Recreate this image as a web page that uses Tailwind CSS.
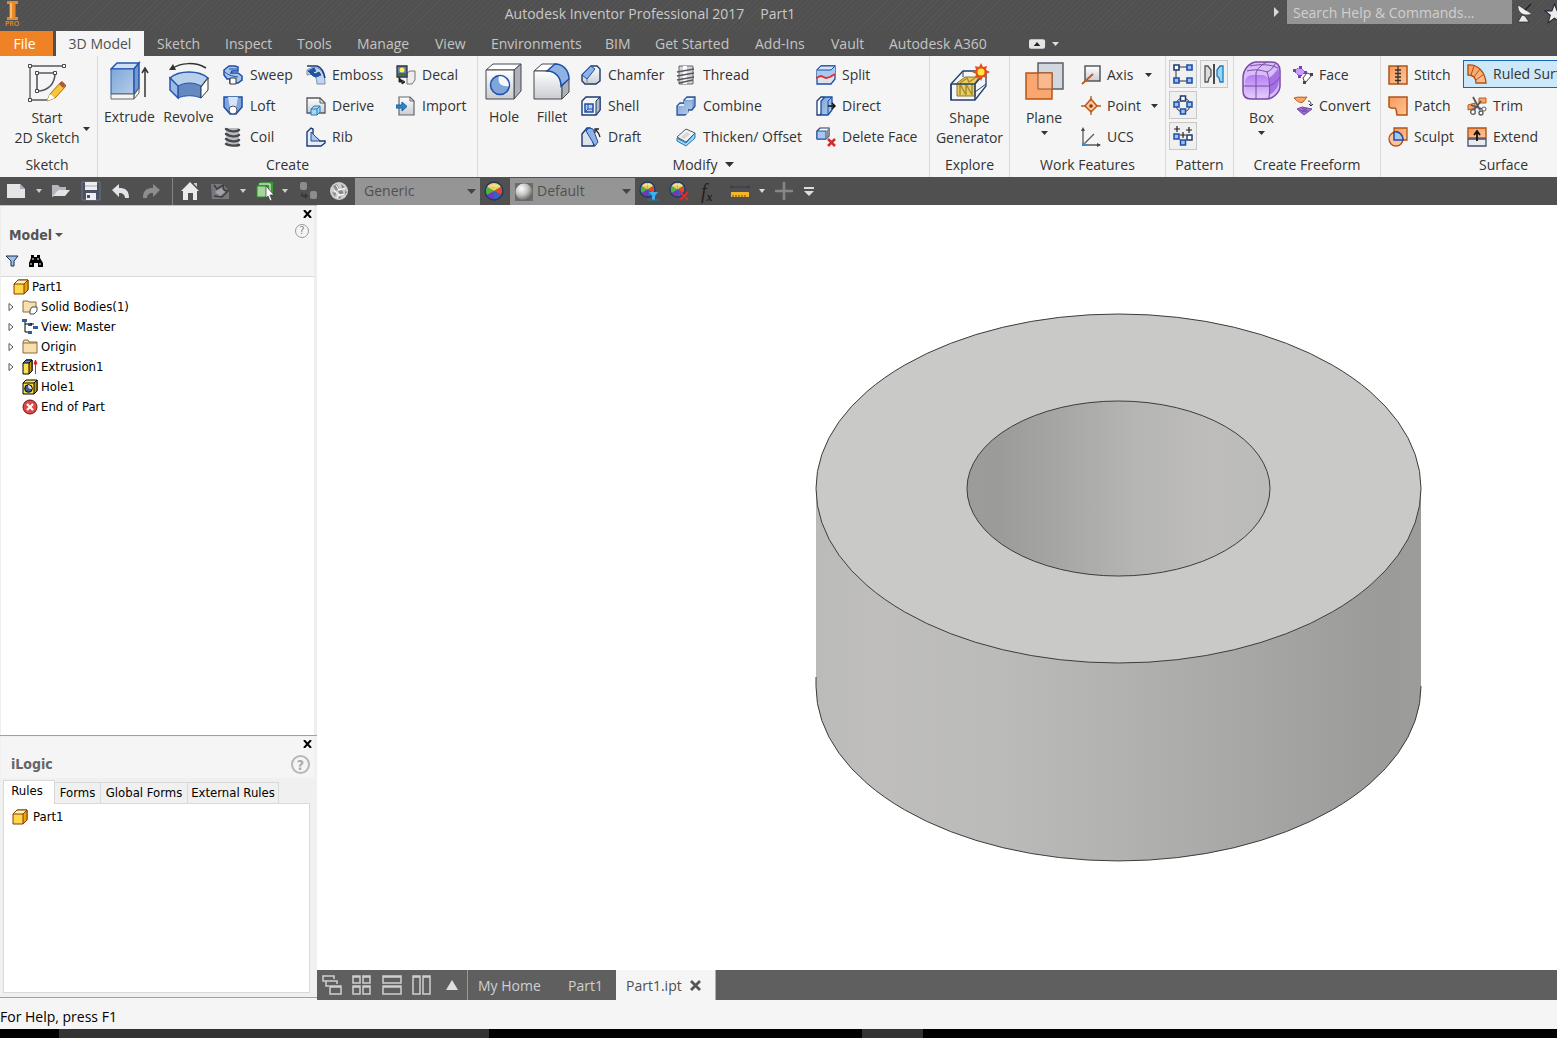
<!DOCTYPE html>
<html lang="en">
<head>
  <meta charset="utf-8">
  <meta name="viewport" content="width=device-width, initial-scale=1">
  <title>Autodesk Inventor Professional 2017 - Part1</title>
  <script src="https://cdn.jsdelivr.net/npm/@tailwindcss/browser@4"></script>
</head>
<body class="flex h-screen flex-col overflow-hidden bg-[#f5f5f5] font-['Open_Sans',sans-serif] text-sm text-[#333333]">

  <!-- Shared gradients and icons -->
  <svg class="absolute h-0 w-0" aria-hidden="true">
    <defs>
      <linearGradient id="blue" x1="0" y1="0" x2="1" y2="1"><stop offset="0" stop-color="#7fa6d8"/><stop offset="1" stop-color="#b4cdea"/></linearGradient>
      <linearGradient id="grey" x1="0" y1="0" x2="0" y2="1"><stop offset="0" stop-color="#ffffff"/><stop offset="1" stop-color="#c9ccd1"/></linearGradient>
      <linearGradient id="orange" x1="0" y1="0" x2="1" y2="1"><stop offset="0" stop-color="#f79a58"/><stop offset="1" stop-color="#ffc499"/></linearGradient>
      <linearGradient id="purple" x1="0" y1="0" x2="0" y2="1"><stop offset="0" stop-color="#b67df5"/><stop offset="1" stop-color="#e2cdfa"/></linearGradient>
      <radialGradient id="ball" cx=".35" cy=".3" r=".75"><stop offset="0" stop-color="#ffffff"/><stop offset=".5" stop-color="#c4c4c0"/><stop offset="1" stop-color="#5c5c5c"/></radialGradient>
      <symbol id="wheel" viewBox="0 0 20 20">
        <circle cx="10" cy="10" r="9" fill="#2e4f8c"/>
        <path d="M10 10V2a8 8 0 0 1 7 4z" fill="#d9df52"/><path d="M10 10l7-4a8 8 0 0 1 0 8z" fill="#e8452c"/>
        <path d="M10 10l7 4a8 8 0 0 1-7 4z" fill="#3560c4"/><path d="M10 10v8a8 8 0 0 1-7-4z" fill="#7a35c0"/>
        <path d="M10 10l-7 4a8 8 0 0 1 0-8z" fill="#49b53c"/><path d="M10 10L3 6a8 8 0 0 1 7-4z" fill="#f3c766"/>
        <circle cx="10" cy="10" r="9" fill="none" stroke="#23375f" stroke-width="1.300"/><path d="M4 6a8 8 0 0 1 12 0c-3-1-9-1-12 0z" fill="#fff" fill-opacity=".45"/>
      </symbol>
      <symbol id="part" viewBox="0 0 16 16">
        <path d="M1 5l4-4h10v10l-4 4H1z" fill="#ffd84a" stroke="#8a3a00"/><path d="M1 5l4-4h10l-4 4z" fill="#fff3b8" stroke="#8a3a00"/><path d="M11 5l4-4v10l-4 4z" fill="#e5a800" stroke="#8a3a00"/>
      </symbol>
    </defs>
  </svg>

  <!-- Title bar -->
  <header class="flex h-[31px] shrink-0 items-start overflow-hidden bg-[#505050] bg-[repeating-linear-gradient(135deg,#505050_0px,#505050_3px,#555555_3px,#555555_4px)] text-[#c9c9c9]">
    <svg class="h-[27px] w-[26px] shrink-0" viewBox="0 0 26 27">
      <path d="M7 1h11v3h-2.500v13H18v3H7v-3h2.500V4H7z" fill="#e88a2b"/><path d="M10 3h2v15h-2z" fill="#f7bd78"/>
      <text x="5" y="26" font-size="7" font-weight="600" fill="#e88a2b">PRO</text>
    </svg>
    <h1 class="flex flex-1 justify-center gap-4 leading-7"><span>Autodesk Inventor Professional 2017</span><span>Part1</span></h1>
    <div class="flex shrink-0 items-start">
      <svg class="mt-[7px] mr-[7px] h-[10px] w-[6px]" viewBox="0 0 6 10"><path d="M0 0l5 5-5 5z" fill="#d8d8d8"/></svg>
      <input type="text" aria-label="Search Help and Commands" placeholder="Search Help &amp; Commands..." class="h-6 w-[225px] bg-[#959595] px-[6px] text-sm text-white placeholder:text-[#d0d0d0]">
      <button type="button" aria-label="Communication center" class="mt-[3px] ml-[4px] h-5 w-5">
        <svg viewBox="0 0 20 20"><path d="M2 2c-1 8 6 12 14 9z" fill="#f0f0f0" stroke="#333" stroke-width=".7"/><path d="M9 7l6-6" stroke="#222" stroke-width="1.500"/><path d="M6 12l-4 7h11l-4-6z" fill="#e8e8e8" stroke="#222" stroke-width=".7"/></svg>
      </button>
      <button type="button" aria-label="Favorites" class="mt-[3px] mr-[-8px] ml-[8px] h-[21px] w-[21px]">
        <svg viewBox="0 0 20 20"><path d="M10 1l2.500 6.500H19l-5 4.200 2 7L10 14.500 4 18.700l2-7-5-4.200h6.500z" fill="#ececec" stroke="#222a38"/></svg>
      </button>
    </div>
  </header>

  <!-- Ribbon tabs -->
  <nav class="flex h-[25px] shrink-0 items-stretch bg-[#505050] text-[#c4c4c4]">
    <button type="button" class="w-[53px] bg-[#f08226] pr-1 text-white">File</button>
    <a href="#" class="ml-[3px] flex w-[88px] items-center justify-center bg-[#f5f5f5] text-[#505050]">3D Model</a>
    <div class="flex items-center whitespace-nowrap pl-[13px]">
      <a href="#" class="w-[68px]">Sketch</a>
      <a href="#" class="w-[72px]">Inspect</a>
      <a href="#" class="w-[60px]">Tools</a>
      <a href="#" class="w-[78px]">Manage</a>
      <a href="#" class="w-[56px]">View</a>
      <a href="#" class="w-[114px]">Environments</a>
      <a href="#" class="w-[50px]">BIM</a>
      <a href="#" class="w-[100px]">Get Started</a>
      <a href="#" class="w-[76px]">Add-Ins</a>
      <a href="#" class="w-[58px]">Vault</a>
      <a href="#" class="w-[140px]">Autodesk A360</a>
      <button type="button" aria-label="Minimize ribbon" class="flex items-center gap-[6px]">
        <svg class="h-[10px] w-[17px]" viewBox="0 0 18 10"><rect width="17" height="10" rx="2" fill="#e2e4e8"/><path d="M5 7l3.500-4L12 7z" fill="#222"/></svg>
        <svg class="h-1 w-[7px]" viewBox="0 0 7 4"><path d="M0 0h7L3.500 4z" fill="#dddddd"/></svg>
      </button>
    </div>
  </nav>

  <!-- Ribbon -->
  <div class="flex h-[121px] shrink-0 overflow-hidden whitespace-nowrap bg-[#f5f5f5] leading-5">

    <section class="flex w-[98px] shrink-0 flex-col border-r border-[#d9d9d9] pt-[3px]">
      <div class="h-[93px]">
        <button type="button" class="relative flex w-[94px] flex-col items-center pt-[2px]">
          <svg class="h-[41px] w-[40px]" viewBox="0 0 40 41">
            <g fill="none" stroke="#55585e" stroke-width="1.300"><path d="M3 5h34M3 5v34h18"/><path d="M10 12h18c0 10-6 18-18 18z" stroke-width="1.600"/></g>
            <g fill="#fff" stroke="#44474c"><path d="M1.500 3.500h3v3h-3zM35.500 3.500h3v3h-3zM1.500 37.500h3v3h-3zM8.500 10.500h3v3h-3zM26.500 10.500h3v3h-3zM8.500 28.500h3v3h-3z"/></g>
            <path d="M20 40l3-7 11-12 5 4-11 12z" fill="#f8c63c" stroke="#a86a08"/><path d="M20 40l3-7 5 4z" fill="#fff"/><path d="M32 23l3-3 4 4-3 3z" fill="#b0563a"/>
          </svg>
          <span class="mt-[6px]">Start</span>
          <span>2D Sketch</span>
          <svg class="absolute right-[4px] bottom-[17px] h-1 w-[7px]" viewBox="0 0 7 4"><path d="M0 0h7L3.500 4z" fill="#333"/></svg>
        </button>
      </div>
      <h2 class="pr-[3px] text-center leading-[25px]">Sketch</h2>
    </section>

    <section class="flex w-[380px] shrink-0 flex-col border-r border-[#d9d9d9] pt-[3px]">
      <div class="grid h-[93px] grid-cols-[61px_57px_83px_90px_80px] pl-[1px]">
        <button type="button" class="flex flex-col items-center pt-[2px]">
          <svg class="h-[42px] w-[40px]" viewBox="0 0 40 42">
            <path d="M1 8l6-6h22l-5 6z" fill="#cfe0f4" stroke="#2455b0" stroke-width="1.500"/><path d="M1 8h23v25H1z" fill="url(#blue)" stroke="#2455b0"/><path d="M24 8l5-6v25l-5 7z" fill="#7298cc" stroke="#2455b0" stroke-width="1.500"/>
            <path d="M1 33h23v5H1zM24 34l5-7v5l-5 6z" fill="#f4f4f4" stroke="#666"/><path d="M35 36V9M32 12l3-5 3 5" fill="none" stroke="#333" stroke-width="1.500"/>
          </svg>
          <span class="mt-[4px]">Extrude</span>
        </button>
        <button type="button" class="flex flex-col items-center pt-[2px]">
          <svg class="h-[42px] w-[42px]" viewBox="0 0 42 42">
            <path d="M4 8C12 1 28 1 38 7" fill="none" stroke="#333" stroke-width="1.500"/><path d="M1 9l4-6 3 6z" fill="#333"/>
            <path d="M2 17c9-8 29-8 38 0l-7 9c-6-4-16-4-23 0z" fill="#b9d0ec" stroke="#2455b0" stroke-width="1.500"/><path d="M10 25c7-4 16-4 23 0v12c-7-3-16-3-23 0z" fill="#6488bf" stroke="#2455b0"/><path d="M2 17l8 8v12l-8-8z" fill="#9dbbe2" stroke="#2455b0" stroke-width="1.500"/><path d="M33 26l7-9v12l-7 8z" fill="#fff" stroke="#333"/>
          </svg>
          <span class="mt-[4px]">Revolve</span>
        </button>
        <div class="pl-[6px]">
          <button type="button" class="flex h-[31px] items-center gap-[7px]">
            <svg class="h-5 w-5" viewBox="0 0 20 20"><path d="M1 5l5-4h6l3 1v4H9l-1 2h7l4 3v4l-4 3H7v-4H4l-3-4z" fill="#a6c5ec" stroke="#1d4ea8" stroke-width="1.500"/><path d="M1 6c3 4 8 5 14 6M6 4h8" fill="none" stroke="#1d4ea8"/><path d="M7 13h6v6H7z" fill="#fff" stroke="#333"/></svg>Sweep
          </button>
          <button type="button" class="flex h-[31px] items-center gap-[7px]">
            <svg class="h-5 w-5" viewBox="0 0 20 20"><path d="M1 1h18v10l-6 7H7l-6-7z" fill="#7ea6dc" stroke="#1d4ea8" stroke-width="1.500"/><path d="M5 1h10l-2 11H7z" fill="#d5e4f6"/><circle cx="10" cy="14" r="4" fill="#fff" stroke="#555"/></svg>Loft
          </button>
          <button type="button" class="flex h-[31px] items-center gap-[7px]">
            <svg class="h-5 w-5" viewBox="0 0 20 20"><path d="M3 1h13v18H3z" fill="#b9bbbe"/><g fill="none" stroke="#45484c" stroke-width="2.400" stroke-linecap="round"><path d="M3 2c4 3 10 3 13 1M3 7c4 3 10 3 13 1M3 12c4 3 10 3 13 1M3 17c4 2 10 2 13 1"/></g></svg>Coil
          </button>
        </div>
        <div class="pl-[6px]">
          <button type="button" class="flex h-[31px] items-center gap-[6px]">
            <svg class="h-5 w-5" viewBox="0 0 20 20"><path d="M1 5C10-1 19 4 19 19h-8C11 12 8 8 1 10z" fill="#c3d5ea" stroke="#7990ad"/><path d="M1 1h10c5 2 7 6 8 12" fill="none" stroke="#173a7a" stroke-width="1.500"/><path d="M2 6l6-3 2 3-3 1 2 2 4-2 2 3-5 2-3-1z" fill="#2054a8" stroke="#2054a8"/></svg>Emboss
          </button>
          <button type="button" class="flex h-[31px] items-center gap-[6px]">
            <svg class="h-5 w-5" viewBox="0 0 20 20"><path d="M1 2h13l5 5v10H1z" fill="url(#grey)" stroke="#55585e" stroke-width="1.300"/><path d="M14 2v5h5" fill="none" stroke="#55585e"/><path d="M5 13l3-3h6v6l-3 3H5z" fill="#a9d8f3" stroke="#1b7cc0"/><path d="M5 13h6v6M11 13l3-3" fill="none" stroke="#1b7cc0"/></svg>Derive
          </button>
          <button type="button" class="flex h-[31px] items-center gap-[6px]">
            <svg class="h-5 w-5" viewBox="0 0 20 20"><path d="M1 5l4-4 2 1v6l7 6h5v2l-4 3H1z" fill="#e9edf3" stroke="#1b3a70" stroke-width="1.400"/><path d="M5 5v9h9z" fill="#aac6ec" stroke="#1d4ea8"/></svg>Rib
          </button>
        </div>
        <div class="pl-[6px]">
          <button type="button" class="flex h-[31px] items-center gap-[6px]">
            <svg class="h-5 w-5" viewBox="0 0 20 20"><path d="M11 8l3-2h5v9l-3 4h-5z" fill="#eee" stroke="#777"/><path d="M1 1h10v11H1z" fill="#5b83b8" stroke="#333" stroke-width="1.300"/><path d="M2 8h8v3H2z" fill="#4c6a3a"/><circle cx="6" cy="5" r="2.500" fill="#fff14d"/><path d="M3 12v5h5M6 15l3 2-3 2z" fill="#222" stroke="#222"/></svg>Decal
          </button>
          <button type="button" class="flex h-[31px] items-center gap-[6px]">
            <svg class="h-5 w-5" viewBox="0 0 20 20"><path d="M3 1h11l4 4v14H3z" fill="url(#grey)" stroke="#666" stroke-width="1.200"/><path d="M14 1v4h4" fill="none" stroke="#666"/><path d="M0 9h6V6l5 4.500L6 15v-3H0z" fill="#2b86cc" stroke="#15609d"/></svg>Import
          </button>
        </div>
      </div>
      <h2 class="text-center leading-[25px]">Create</h2>
    </section>

    <section class="flex w-[452px] shrink-0 flex-col border-r border-[#d9d9d9] pt-[3px]">
      <div class="grid h-[93px] grid-cols-[48px_48px_95px_140px_110px] pl-[2px]">
        <button type="button" class="flex flex-col items-center pt-[2px]">
          <svg class="h-[42px] w-[40px]" viewBox="0 0 40 42">
            <path d="M2 9l7-6h28l-7 6z" fill="#fff" stroke="#44484e"/><path d="M30 9l7-6v27l-7 8z" fill="#aeb1b7" stroke="#44484e"/><path d="M2 9h28v29H2z" fill="url(#grey)" stroke="#44484e"/>
            <circle cx="16" cy="24" r="9.500" fill="#7fa6d8" stroke="#1d4ea8" stroke-width="1.500"/><path d="M15 15c-2 8 3 11 10 10-1-7-5-10-10-10z" fill="#f4f8fd"/>
          </svg>
          <span class="mt-[4px]">Hole</span>
        </button>
        <button type="button" class="flex flex-col items-center pt-[2px]">
          <svg class="h-[42px] w-[40px]" viewBox="0 0 40 42">
            <path d="M2 10l8-7h15l-9 7z" fill="#fff" stroke="#44484e"/><path d="M2 10h13c9 0 15 7 15 16v12H2z" fill="url(#grey)" stroke="#44484e"/><path d="M30 25l7-7v13l-7 7z" fill="#aeb1b7" stroke="#44484e"/>
            <path d="M15 10l8-7c9 0 14 7 14 15l-8 7c0-8-5-15-14-15z" fill="#8db2e3" stroke="#1d4ea8" stroke-width="1.500"/>
          </svg>
          <span class="mt-[4px]">Fillet</span>
        </button>
        <div class="pl-[5px]">
          <button type="button" class="flex h-[31px] items-center gap-[7px]">
            <svg class="h-5 w-5" viewBox="0 0 20 20"><path d="M1 10l9-9h6l3 3v12l-4 3H4l-3-3z" fill="url(#grey)" stroke="#1b3a70" stroke-width="1.400"/><path d="M1 10l9-9 4 3-8 10z" fill="#8db2e3" stroke="#1d4ea8"/><path d="M6 14v5" stroke="#888"/></svg>Chamfer
          </button>
          <button type="button" class="flex h-[31px] items-center gap-[7px]">
            <svg class="h-5 w-5" viewBox="0 0 20 20"><path d="M1 5l4-4h14v13l-4 5H1z" fill="#f4f4f6" stroke="#1b3a70" stroke-width="1.400"/><path d="M15 5l4-4v13l-4 5z" fill="#b4b8c0" stroke="#1b3a70"/><path d="M4 8h8v8H4z" fill="#b9cff0" stroke="#1d4ea8" stroke-width="1.500"/><path d="M7 8v5h5M7 13l-3 3" fill="none" stroke="#1d4ea8"/></svg>Shell
          </button>
          <button type="button" class="flex h-[31px] items-center gap-[7px]">
            <svg class="h-5 w-5" viewBox="0 0 20 20"><path d="M1 7l5-6h3l4 18H1z" fill="#dfe2e8" stroke="#1b3a70" stroke-width="1.400"/><path d="M5 4l3-3 4 1 5 13-3 4z" fill="#8db2e3" stroke="#1d4ea8"/><path d="M19 10c-1-4-2-5-4-7M14 6V2h4" fill="none" stroke="#222" stroke-width="1.300"/></svg>Draft
          </button>
        </div>
        <div class="pl-[5px]">
          <button type="button" class="flex h-[31px] items-center gap-[7px]">
            <svg class="h-5 w-5" viewBox="0 0 20 20"><path d="M3 1h14v18H3z" fill="#d3d5d8" stroke="#666"/><path d="M7 1h4v18H7z" fill="#fff"/><path d="M1 7l17-3M1 11l17-3M1 15l17-3M3 18l14-3" stroke="#55585c" stroke-width="1.600"/></svg>Thread
          </button>
          <button type="button" class="flex h-[31px] items-center gap-[7px]">
            <svg class="h-5 w-5" viewBox="0 0 20 20"><path d="M1 10l3-3h4V4l3-3h8v9l-3 4h-4v2l-3 3H1z" fill="#7ea4d8" stroke="#2b5798" stroke-width="1.300"/><path d="M2 10h6V5h8v8h-4v5H2z" fill="url(#blue)"/><path d="M2 10l2-2h4v2zM9 4l2-2h7l-2 2z" fill="#e2edf9"/></svg>Combine
          </button>
          <button type="button" class="flex h-[31px] items-center gap-[7px]">
            <svg class="h-5 w-5" viewBox="0 0 20 20"><path d="M1 11l9 5 9-10v5l-9 8-9-5z" fill="#9fd2f3" stroke="#1b7cc0"/><path d="M1 10l9-8 9 4-9 9z" fill="#f1f1f1" stroke="#55585e"/><path d="M5 10l6-5 3 2-6 5z" fill="#d7d7d7"/></svg>Thicken/ Offset
          </button>
        </div>
        <div class="pl-[5px]">
          <button type="button" class="flex h-[31px] items-center gap-[6px]">
            <svg class="h-5 w-5" viewBox="0 0 20 20"><path d="M1 5l4-4h14v13l-4 5H1z" fill="#dfe2e8" stroke="#1d4ea8" stroke-width="1.300"/><path d="M1 5h14l4-4v8l-4 3H1z" fill="#a9c8ee"/><path d="M1 5l4-4h14l-4 4z" fill="#d5e4f6" stroke="#1d4ea8"/><path d="M0 13l5-2 5 2 4-1 5-3" fill="none" stroke="#e02a2a" stroke-width="1.700"/></svg>Split
          </button>
          <button type="button" class="flex h-[31px] items-center gap-[6px]">
            <svg class="h-5 w-5" viewBox="0 0 20 20"><path d="M1 5l4-4h3v13l-4 5H1z" fill="#fff" stroke="#1b3a70" stroke-width="1.300"/><path d="M5 5l4-4h7v13l-4 5H5z" fill="url(#blue)" stroke="#1d4ea8" stroke-width="1.300"/><path d="M12 5l4-4M12 5v14" stroke="#1d4ea8"/><path d="M12 10h6M16 7l3 3-3 3" fill="none" stroke="#111" stroke-width="1.500"/></svg>Direct
          </button>
          <button type="button" class="flex h-[31px] items-center gap-[6px]">
            <svg class="h-5 w-5" viewBox="0 0 20 20"><path d="M1 4l3-3h9v8l-3 3H1z" fill="#fff" stroke="#1b3a70" stroke-width="1.200"/><path d="M1 4h9v8H1z" fill="#a9c8ee" stroke="#1d4ea8"/><path d="M10 4l3-3v8l-3 3z" fill="#8c9096"/><path d="M12 12l7 7M19 12l-7 7" stroke="#d22c2c" stroke-width="2.500"/></svg>Delete Face
          </button>
        </div>
      </div>
      <h2 class="flex items-center justify-center gap-[8px] leading-[25px]">Modify<svg class="h-[5px] w-[9px]" viewBox="0 0 9 5"><path d="M0 0h9L4.500 5z" fill="#333"/></svg></h2>
    </section>

    <section class="flex w-[80px] shrink-0 flex-col border-r border-[#d9d9d9] pt-[3px]">
      <div class="h-[93px]">
        <button type="button" class="flex w-full flex-col items-center pt-[3px]">
          <svg class="h-[40px] w-[40px]" viewBox="0 0 40 40">
            <path d="M1 22l12-13h23v15L25 38H1z" fill="#f3f6fa" stroke="#263f68" stroke-width="1.300"/><path d="M7 21l8-6h14l-4 6v13H7z" fill="#e8cd62" stroke="#8d7420"/><path d="M10 33V22l6 11V22l6 11V22M10 21l7-5 2 4 6-4" fill="none" stroke="#a98d2c" stroke-width="1.500"/><path d="M1 22h24l11-13M25 22v16M1 22v16" fill="none" stroke="#263f68" stroke-width="1.500"/><path d="M13 9v6M25 30l11-8" stroke="#263f68"/>
            <path d="M31 1l2 4 4-1-1 4 4 2-4 2 1 4-4-1-2 4-2-4-4 1 1-4-4-2 4-2-1-4 4 1z" fill="#e84e1c"/><circle cx="31" cy="10" r="3.500" fill="#ffe83c"/>
          </svg>
          <span class="mt-[6px]">Shape</span>
          <span>Generator</span>
        </button>
      </div>
      <h2 class="text-center leading-[25px]">Explore</h2>
    </section>

    <section class="flex w-[156px] shrink-0 flex-col border-r border-[#d9d9d9] pt-[3px]">
      <div class="grid h-[93px] grid-cols-[64px_85px] pl-[2px]">
        <button type="button" class="flex flex-col items-center pt-[2px]">
          <svg class="h-[41px] w-[40px]" viewBox="0 0 40 41"><path d="M14 2h25v26H14z" fill="#d2d7df" stroke="#5b6068" stroke-width="1.500"/><path d="M2 12h26v26H2z" fill="#fb9f60" fill-opacity=".9" stroke="#b75414" stroke-width="1.500"/><path d="M14 12h14v16H14z" fill="#fbb88c" stroke="#8a5a3c"/></svg>
          <span class="mt-[6px]">Plane</span>
          <svg class="mt-[3px] h-1 w-[7px]" viewBox="0 0 7 4"><path d="M0 0h7L3.500 4z" fill="#333"/></svg>
        </button>
        <div class="pl-[5px]">
          <button type="button" class="flex h-[31px] w-[71px] items-center gap-[6px]">
            <svg class="h-5 w-5" viewBox="0 0 20 20"><path d="M4 1h15v15H4z" fill="url(#grey)" stroke="#55585e" stroke-width="1.500"/><path d="M1 19L12 9" stroke="#bb5a1e" stroke-width="1.800"/></svg>Axis
            <svg class="ml-auto h-1 w-[7px]" viewBox="0 0 7 4"><path d="M0 0h7L3.500 4z" fill="#333"/></svg>
          </button>
          <button type="button" class="flex h-[31px] w-[77px] items-center gap-[6px]">
            <svg class="h-5 w-5" viewBox="0 0 20 20"><path d="M10 3l6 7-6 6-6-6z" fill="#fdc59b" stroke="#bb5a1e" stroke-width="1.500"/><path d="M10 0v5M10 14v5M0 10h5M15 10h5" stroke="#bb5a1e" stroke-width="1.300"/><circle cx="10" cy="10" r="1.800" fill="#8a3c0c"/></svg>Point
            <svg class="ml-auto h-1 w-[7px]" viewBox="0 0 7 4"><path d="M0 0h7L3.500 4z" fill="#333"/></svg>
          </button>
          <button type="button" class="flex h-[31px] items-center gap-[6px]">
            <svg class="h-5 w-5" viewBox="0 0 20 20"><path d="M2 18V2M2 18h17M3 17L13 7" fill="none" stroke="#55585e" stroke-width="1.300"/><path d="M0 4l2-4 2 4zM16 16l4 2-4 2z" fill="#44474c"/><path d="M1 16h3v3H1z" fill="#2b8fe0"/></svg>UCS
          </button>
        </div>
      </div>
      <h2 class="text-center leading-[25px]">Work Features</h2>
    </section>

    <section class="flex w-[68px] shrink-0 flex-col border-r border-[#d9d9d9] pt-[3px]">
      <div class="grid h-[93px] grid-cols-[28px_28px] content-start gap-[3px] pt-[1px] pl-[3px]">
        <button type="button" aria-label="Rectangular pattern" class="flex h-7 items-center justify-center border border-[#c8c8c8] bg-[#f0f0f0]">
          <svg class="h-5 w-5" viewBox="0 0 20 20"><path d="M3 3h14M3 3v14h14" fill="none" stroke="#333"/><g fill="#9cc0f0" stroke="#1d4ea8" stroke-width="1.600"><path d="M14 1h5v5h-5zM1 14h5v5H1zM14 14h5v5h-5z"/><path d="M1 1h5v5H1z" fill="#fff" stroke="#1b3a70"/></g></svg>
        </button>
        <button type="button" aria-label="Mirror" class="flex h-7 items-center justify-center border border-[#c8c8c8] bg-[#f0f0f0]">
          <svg class="h-5 w-5" viewBox="0 0 20 20"><path d="M1 2h3l3 4v6l-2 2-1 4H1z" fill="#ddd" stroke="#555" stroke-width="1.300"/><path d="M19 2h-3l-3 4v6l2 2 1 4h3z" fill="#9cd6f5" stroke="#1b7cc0" stroke-width="1.300"/><path d="M10 0v20" stroke="#111" stroke-width="1.500"/></svg>
        </button>
        <button type="button" aria-label="Circular pattern" class="col-start-1 flex h-7 items-center justify-center border border-[#c8c8c8] bg-[#f0f0f0]">
          <svg class="h-5 w-5" viewBox="0 0 20 20"><circle cx="10" cy="10" r="7" fill="none" stroke="#333"/><g fill="#9cc0f0" stroke="#1d4ea8" stroke-width="1.500"><path d="M1 7h5v5H1zM14 7h5v5h-5zM7.500 14h5v5h-5z"/><path d="M7.500 1h5v5h-5z" fill="#fff" stroke="#1b3a70"/></g></svg>
        </button>
        <button type="button" aria-label="Sketch driven pattern" class="col-start-1 flex h-7 items-center justify-center border border-[#c8c8c8] bg-[#f0f0f0]">
          <svg class="h-5 w-5" viewBox="0 0 20 20"><path d="M4 0v6M1 3h6M16 1v6M13 4h6M10 6v6M7 9h6" stroke="#222" stroke-width="1.200"/><g fill="#9cc0f0" stroke="#1d4ea8" stroke-width="1.500"><path d="M1 8h5v5H1zM7.500 14h5v5h-5z"/><path d="M14 9h5v5h-5z" fill="#fff" stroke="#1b3a70"/></g></svg>
        </button>
      </div>
      <h2 class="text-center leading-[25px]">Pattern</h2>
    </section>

    <section class="flex w-[147px] shrink-0 flex-col border-r border-[#d9d9d9] pt-[3px]">
      <div class="grid h-[93px] grid-cols-[53px_85px] pl-[1px]">
        <button type="button" class="flex flex-col items-center pt-[2px]">
          <svg class="h-[41px] w-[40px]" viewBox="0 0 40 41">
            <path d="M1 17c0-8 6-16 14-16h14c6 0 9 3 9 9v15c0 6-7 13-13 13H9c-5 0-8-3-8-8z" fill="#d9bdf8" stroke="#7a4aa5" stroke-width="1.500"/><rect x="3" y="14" width="24" height="23" rx="7" fill="url(#purple)"/><path d="M27 17c3-2 7-6 9-10 2 6 1 14 0 18-2 4-6 8-9 9z" fill="#a671e8"/>
            <path d="M14 38V12c1-4 5-8 11-11M1 25h26c4-1 8-5 11-9M5 10c8-2 14-1 20 1 3 8 3 18 2 26M25 11c4-2 6-4 8-8M8 5c10-2 20-2 28 2" fill="none" stroke="#7a4aa5"/>
          </svg>
          <span class="mt-[6px]">Box</span>
          <svg class="mt-[3px] h-1 w-[7px]" viewBox="0 0 7 4"><path d="M0 0h7L3.500 4z" fill="#333"/></svg>
        </button>
        <div class="pl-[5px]">
          <button type="button" class="flex h-[31px] items-center gap-[6px]">
            <svg class="h-5 w-5" viewBox="0 0 20 20"><path d="M1 6l6-4 5 5-5 5z" fill="#c79df5" stroke="#7a4aa5" stroke-dasharray="2 1"/><path d="M10 13l4-5 5 2-7 8z" fill="#fff" stroke="#444"/><path d="M0 4h3v3H0zM6 1h3v3H6zM5 10h3v3H5zM11 6h3v3h-3z" fill="#7a3cc0"/><path d="M17 8h3v3h-3zM10 16h3v3h-3z" fill="#444"/></svg>Face
          </button>
          <button type="button" class="flex h-[31px] items-center gap-[6px]">
            <svg class="h-5 w-5" viewBox="0 0 20 20"><path d="M1 2c5-2 9 0 13-1l-4 5C7 8 4 5 1 2z" fill="#f7a56a" stroke="#bb5a1e"/><path d="M4 13l5-2 10 2-8 6z" fill="#a06fdc" stroke="#7a4aa5"/><path d="M6 14l8 2M9 12l6 3M8 17l6-5" stroke="#7a4aa5"/><path d="M15 5c3 0 3 2 3 5M16 8l2 2 2-2" fill="none" stroke="#333"/></svg>Convert
          </button>
        </div>
      </div>
      <h2 class="text-center leading-[25px]">Create Freeform</h2>
    </section>

    <section class="flex w-[246px] shrink-0 flex-col border-r border-[#d9d9d9] pt-[3px]">
      <div class="grid h-[93px] grid-cols-[75px_150px] pl-[7px]">
        <div>
          <button type="button" class="flex h-[31px] items-center gap-[6px]">
            <svg class="h-5 w-5" viewBox="0 0 20 20"><path d="M1 1h18v18H1z" fill="url(#orange)" stroke="#b0531a" stroke-width="1.500"/><path d="M10 1v18M7 5h6M7 8.500h6M7 12h6M7 15.500h6" stroke="#333" stroke-width="1.300"/></svg>Stitch
          </button>
          <button type="button" class="flex h-[31px] items-center gap-[6px]">
            <svg class="h-5 w-5" viewBox="0 0 20 20"><path d="M1 1h18v18H9c-1-3 0-6-2-7-2 0-4 1-6-1z" fill="url(#orange)" stroke="#b0531a" stroke-width="1.500"/></svg>Patch
          </button>
          <button type="button" class="flex h-[31px] items-center gap-[6px]">
            <svg class="h-5 w-5" viewBox="0 0 20 20"><path d="M6 1h13v12H6z" fill="url(#orange)" stroke="#b0531a" stroke-width="1.300"/><circle cx="8" cy="12" r="7" fill="#fbc49a" stroke="#b0531a" stroke-width="1.300"/><path d="M6 5c5-1 9 3 9 8H6z" fill="#a9c8ee" stroke="#1d4ea8" stroke-width="1.500"/></svg>Sculpt
          </button>
        </div>
        <div>
          <button type="button" class="mt-[1px] mb-[2px] flex h-7 w-[164px] items-center gap-[6px] border border-[#1467bd] bg-[#cde8f8] pl-[3px]">
            <svg class="h-5 w-5" viewBox="0 0 20 20"><path d="M1 1c10-1 17 7 18 18H9C9 14 6 11 1 11z" fill="url(#orange)" stroke="#b0531a" stroke-width="1.400"/><path d="M4 11l3-9M7 13l6-8M9 16l8-6" stroke="#b0531a"/></svg>Ruled Surface
          </button>
          <button type="button" class="flex h-[31px] items-center gap-[6px] pl-[4px]">
            <svg class="h-5 w-5" viewBox="0 0 20 20"><path d="M12 2h7v5h-7zM1 9l7-2v5l-7 2z" fill="#f7a56a" stroke="#bb5a1e"/><path d="M6 1l7 13M14 5L7 14M4 9l11 4" stroke="#55585e" stroke-width="1.800"/><circle cx="6" cy="16" r="2.300" fill="#fff" stroke="#55585e" stroke-width="1.300"/><circle cx="14" cy="17" r="2" fill="#fff" stroke="#55585e" stroke-width="1.300"/><circle cx="17" cy="13" r="2" fill="#fff" stroke="#55585e"/></svg>Trim
          </button>
          <button type="button" class="flex h-[31px] items-center gap-[6px] pl-[4px]">
            <svg class="h-5 w-5" viewBox="0 0 20 20"><path d="M1 1h18v10H1z" fill="url(#orange)" stroke="#b0531a" stroke-width="1.400"/><path d="M1 12h18v7H1z" fill="#e8ebf0" stroke="#44526a" stroke-width="1.300"/><path d="M10 14V5M7 8l3-4 3 4" fill="none" stroke="#111" stroke-width="1.800"/></svg>Extend
          </button>
        </div>
      </div>
      <h2 class="text-center leading-[25px]">Surface</h2>
    </section>
  </div>

  <!-- Quick access toolbar -->
  <div class="flex h-[28px] shrink-0 items-center bg-[#505050] pl-[6px]" role="toolbar" aria-label="Quick access">
    <button type="button" aria-label="New" class="flex w-[45px] items-center gap-[10px]">
      <svg class="h-5 w-5" viewBox="0 0 20 20"><path d="M1 3h13l5 5v9H1z" fill="#e3e5e9"/><path d="M14 3v5h5z" fill="#a9adb5"/></svg>
      <svg class="h-1 w-[6px]" viewBox="0 0 6 4"><path d="M0 0h6L3 4z" fill="#ccc"/></svg>
    </button>
    <button type="button" aria-label="Open" class="w-[30px]"><svg class="h-5 w-5" viewBox="0 0 20 20"><path d="M1 4h6l2 2h6v3H7l-5 7H1z" fill="#b4b8be"/><path d="M7 9h12l-5 6H2z" fill="#e2e4e8"/></svg></button>
    <button type="button" aria-label="Save" class="w-[30px]"><svg class="h-5 w-5" viewBox="0 0 20 20"><path d="M1 1h18v18H1z" fill="#4a5264" stroke="#6b7383"/><path d="M4 1h12v8H4zM5 12h10v7H5z" fill="#eceef1"/><path d="M4 5h12" stroke="#aaa"/><path d="M6 14h3v3H6z" fill="#4a5264"/></svg></button>
    <button type="button" aria-label="Undo" class="w-[30px]"><svg class="h-5 w-5" viewBox="0 0 20 20"><path d="M1 9l7-6v4c6 0 10 2 10 10h-4c0-3-2-5-6-5v4z" fill="#e2e4e8"/></svg></button>
    <button type="button" aria-label="Redo" class="w-[31px]"><svg class="h-5 w-5" viewBox="0 0 20 20"><path d="M19 9l-7-6v4C6 7 2 9 2 17h4c0-3 2-5 6-5v4z" fill="#8b8d90"/></svg></button>
    <div class="h-[27px] w-px bg-[#858585]"></div>
    <button type="button" aria-label="Home" class="ml-[7px] w-[30px]"><svg class="h-5 w-5" viewBox="0 0 20 20"><path d="M1 10L10 1l9 9h-2v9h-4v-7H8v7H3v-9z" fill="#e8eaee"/><path d="M14 2h3v4l-3-3z" fill="#ccc"/></svg></button>
    <button type="button" aria-label="Return" class="flex w-[46px] items-center gap-[10px]">
      <svg class="h-5 w-5" viewBox="0 0 20 20"><path d="M1 3h12l6 7v8H2z" fill="#77797c"/><path d="M4 4l3 4 6-4 1 5 4 1-6 6-8-1" fill="none" stroke="#3c3e40" stroke-width="1.600"/><path d="M5 11l6-4 4 4-5 4z" fill="#a0a2a5"/></svg>
      <svg class="h-1 w-[6px]" viewBox="0 0 6 4"><path d="M0 0h6L3 4z" fill="#ccc"/></svg>
    </button>
    <button type="button" aria-label="Select" class="flex w-[42px] items-center gap-[6px]">
      <svg class="h-5 w-5" viewBox="0 0 20 20"><path d="M1 5l4-4h12v11l-4 4H1z" fill="#3e9a33"/><path d="M1 5h11v11H1z" fill="#a5d59b" stroke="#2f8a26"/><path d="M3 3h11v10" fill="none" stroke="#fff"/><path d="M10 5l8 9h-4l2 5-2 1-2-5-2 2z" fill="#fff" stroke="#333" stroke-width=".7"/></svg>
      <svg class="h-1 w-[6px]" viewBox="0 0 6 4"><path d="M0 0h6L3 4z" fill="#ccc"/></svg>
    </button>
    <button type="button" aria-label="Update" class="w-[31px]"><svg class="h-5 w-5" viewBox="0 0 20 20"><rect x="2" y="1" width="7" height="8" rx="2" fill="#8c8c8c"/><rect x="12" y="10" width="7" height="8" rx="2" fill="#8c8c8c"/><path d="M4 12v3h5M7 13l2 2-2 2" fill="none" stroke="#343434" stroke-width="1.500"/></svg></button>
    <button type="button" aria-label="Material" class="w-[26px]"><svg class="h-5 w-5" viewBox="0 0 20 20"><circle cx="10" cy="10" r="9" fill="#cfcfcf"/><path d="M4 5l4-2 2 4-3 3zM12 3l4 3-3 2zM3 11l4 1-1 4zM9 10l4-1 2 4-4 1zM16 9l2 2-2 3zM9 15l4 1-3 2z" fill="#8a8a8a"/><path d="M7 4l3 5 6-2M5 9l5 5 5-1M8 17l3-4" fill="none" stroke="#fff"/></svg></button>
    <div class="relative w-[125px]">
      <select aria-label="Material" class="h-[27px] w-full appearance-none bg-[#959595] px-[9px] text-sm text-[#505050]"><option>Generic</option></select>
      <svg class="pointer-events-none absolute top-[11px] right-[4px] h-[5px] w-[9px]" viewBox="0 0 9 5"><path d="M0 0h9L4.500 5z" fill="#444"/></svg>
    </div>
    <button type="button" aria-label="Adjust appearance" class="mr-[6px] ml-[4px] h-5 w-5"><svg class="h-5 w-5"><use href="#wheel"/></svg></button>
    <div class="relative w-[125px]">
      <select aria-label="Appearance" class="h-[27px] w-full appearance-none bg-[#959595] pl-[27px] text-sm text-[#505050]"><option>Default</option></select>
      <svg class="pointer-events-none absolute top-[5px] left-[5px] h-[18px] w-[18px]" viewBox="0 0 18 18"><path d="M0 0h18v18H0z" fill="#6a6a6a"/><circle cx="9" cy="9" r="8.500" fill="url(#ball)"/></svg>
      <svg class="pointer-events-none absolute top-[11px] right-[4px] h-[5px] w-[9px]" viewBox="0 0 9 5"><path d="M0 0h9L4.500 5z" fill="#444"/></svg>
    </div>
    <button type="button" aria-label="Adjust" class="ml-[4px] w-[30px]"><svg class="h-5 w-5" viewBox="0 0 20 20"><use href="#wheel" width="17" height="17"/><path d="M10 11h9l-3 4v4h-3v-4z" fill="#35b3ea"/><path d="M8 19h12" stroke="#1b7cc0"/></svg></button>
    <button type="button" aria-label="Clear appearance" class="w-[32px]"><svg class="h-5 w-5" viewBox="0 0 20 20"><use href="#wheel" width="17" height="17"/><path d="M11 11l8 8M19 11l-8 8" stroke="#e02a2a" stroke-width="2"/></svg></button>
    <button type="button" aria-label="Parameters" class="w-[29px] text-left font-['Liberation_Serif',serif] text-xl leading-5 text-[#222222] italic">f<sub class="text-xs font-bold">x</sub></button>
    <button type="button" aria-label="Measure" class="flex w-[44px] items-center gap-[9px]">
      <svg class="h-5 w-5" viewBox="0 0 20 20"><path d="M1 6h18M1 4v4M19 4v4" stroke="#2e3a52"/><path d="M1 11h18v5H1z" fill="#f3b52c"/><path d="M3 16v-2M6 16v-2M9 16v-2M12 16v-2M15 16v-2" stroke="#6b4a08"/></svg>
      <svg class="h-1 w-[6px]" viewBox="0 0 6 4"><path d="M0 0h6L3 4z" fill="#ddd"/></svg>
    </button>
    <button type="button" aria-label="Add" class="w-[30px]"><svg class="h-5 w-5" viewBox="0 0 20 20"><path d="M10 1v18M1 10h18" stroke="#878787" stroke-width="2.500"/></svg></button>
    <button type="button" aria-label="Customize"><svg class="h-[9px] w-[10px]" viewBox="0 0 10 9"><path d="M0 0h10v2H0zM0 4h10L5 9z" fill="#ddd"/></svg></button>
  </div>

  <main class="flex min-h-0 flex-1">

    <!-- Side panels -->
    <aside class="mb-[2px] flex w-[317px] shrink-0 flex-col border-t border-b border-[#a0a0a0] border-t-[#c4c4c4] bg-[#f0f0f0] font-['DejaVu_Sans_Condensed','DejaVu_Sans',sans-serif] text-[13px] text-black">
      <section class="flex min-h-0 flex-1 flex-col border-r-[3px] border-l border-[#eeeeee] bg-[#f5f5f5]">
        <div class="flex h-[71px] shrink-0 justify-between border-b border-[#d9d9d9] pl-[4px]">
          <div class="pt-[20px] pl-[4px]">
            <button type="button" class="flex items-center gap-[3px] text-sm leading-[18px] font-bold text-[#555555]">Model<svg class="h-1 w-2" viewBox="0 0 8 4"><path d="M0 0h8L4 4z" fill="#555"/></svg></button>
            <div class="-ml-1 mt-[9px] flex gap-[7px]">
              <button type="button" aria-label="Filter"><svg class="h-4 w-4" viewBox="0 0 16 16"><path d="M1 3h12L9 8v5H6V8z" fill="#9fc0e8" stroke="#1c2f4f"/></svg></button>
              <button type="button" aria-label="Find"><svg class="h-4 w-4" viewBox="0 0 16 16"><path d="M3 2h3v2h3V2h3v3l3 5v4h-5v-4H6v4H1v-4l2-5z" fill="#000"/><path d="M3 10v2M12 10v2M5 5v2M10 5v2" stroke="#fff"/></svg></button>
            </div>
          </div>
          <div class="flex flex-col items-end pt-[4px] pr-[2px]">
            <button type="button" aria-label="Close" class="h-2 w-[9px]"><svg viewBox="0 0 9 8"><path d="M1 0l7 8M8 0L1 8" stroke="#000" stroke-width="2"/></svg></button>
            <button type="button" aria-label="Help" class="mt-[6px] mr-[3px] flex h-[14px] w-[14px] items-center justify-center rounded-full border border-[#999999] text-[11px] leading-3 text-[#888888]">?</button>
          </div>
        </div>
        <ul class="flex-1 bg-white leading-5">
          <li class="flex items-center gap-[3px] pl-[12px]"><svg class="h-4 w-4"><use href="#part"/></svg>Part1</li>
          <li class="flex items-center gap-[3px] pl-[7px]"><svg class="mr-[4px] h-2 w-[7px]" viewBox="0 0 7 8"><path d="M1 0.500L5 4 1 7.500z" fill="#fff" stroke="#555"/></svg><svg class="h-4 w-4" viewBox="0 0 16 16"><path d="M1 13V2h5l1 1h7v10z" fill="#f8dfae" stroke="#8a6d3a"/><path d="M8 11l2-3h5v4l-3 3H8z" fill="#fff" stroke="#444a58"/></svg>Solid Bodies(1)</li>
          <li class="flex items-center gap-[3px] pl-[7px]"><svg class="mr-[4px] h-2 w-[7px]" viewBox="0 0 7 8"><path d="M1 0.500L5 4 1 7.500z" fill="#fff" stroke="#555"/></svg><svg class="h-4 w-4" viewBox="0 0 16 16"><path d="M3 2v11h4M3 5h4" fill="none" stroke="#000"/><path d="M0 0h5v3H0zM6 4h4v3H6zM11 7h5v3h-5zM6 12h4v3H6z" fill="#2e5f94"/><path d="M8 5h4" stroke="#000"/></svg>View: Master</li>
          <li class="flex items-center gap-[3px] pl-[7px]"><svg class="mr-[4px] h-2 w-[7px]" viewBox="0 0 7 8"><path d="M1 0.500L5 4 1 7.500z" fill="#fff" stroke="#555"/></svg><svg class="h-4 w-4" viewBox="0 0 16 16"><path d="M1 14V3l1-2h4l1 2h8v11z" fill="#f8dfae" stroke="#8a6d3a"/><path d="M1 4h14" stroke="#8a6d3a"/></svg>Origin</li>
          <li class="flex items-center gap-[3px] pl-[7px]"><svg class="mr-[4px] h-2 w-[7px]" viewBox="0 0 7 8"><path d="M1 0.500L5 4 1 7.500z" fill="#fff" stroke="#555"/></svg><svg class="h-4 w-4" viewBox="0 0 16 16"><path d="M1 4l3-3h6v11l-3 3H1z" fill="#ffe24a" stroke="#000"/><path d="M1 4l3-3h6L7 4z" fill="#5b8cc8" stroke="#000"/><path d="M7 4l3-3v11l-3 3z" fill="#c8a000" stroke="#000"/><path d="M13.500 15V2M12 5l1.500-4L15 5z" fill="#d22" stroke="#d22"/></svg>Extrusion1</li>
          <li class="flex items-center gap-[3px] pl-[21px]"><svg class="h-4 w-4" viewBox="0 0 16 16"><path d="M1 4l3-3h11v11l-3 3H1z" fill="#ffe24a" stroke="#000"/><path d="M12 4l3-3v11l-3 3z" fill="#c8a000" stroke="#000"/><path d="M1 4h11" stroke="#000"/><circle cx="6.500" cy="9.500" r="3.800" fill="#3a5f96" stroke="#000"/><path d="M6 6c0 3 1 4 4 4-1-3-2-4-4-4z" fill="#dfe9f7"/></svg>Hole1</li>
          <li class="flex items-center gap-[3px] pl-[21px]"><svg class="h-4 w-4" viewBox="0 0 16 16"><circle cx="8" cy="8" r="7" fill="#e04848" stroke="#7a1414"/><path d="M5 5l6 6M11 5l-6 6" stroke="#fff" stroke-width="2.200"/></svg>End of Part</li>
        </ul>
      </section>

      <section class="flex h-[262px] shrink-0 flex-col border-t border-[#a0a0a0] pt-px">
        <div class="mr-[3px] ml-px flex h-[41px] shrink-0 justify-between bg-[#f5f5f5]">
          <h2 class="pt-[18px] pl-[10px] text-sm leading-[18px] font-bold text-[#666666]">iLogic</h2>
          <div class="flex flex-col items-end pt-[3px] pr-[2px]">
            <button type="button" aria-label="Close" class="h-2 w-[9px]"><svg viewBox="0 0 9 8"><path d="M1 0l7 8M8 0L1 8" stroke="#000" stroke-width="2"/></svg></button>
            <button type="button" aria-label="Help" class="mt-[7px] mr-[2px] flex h-[19px] w-[19px] items-center justify-center rounded-full border-2 border-[#b8b8b8] text-sm leading-4 font-bold text-[#aaaaaa]">?</button>
          </div>
        </div>
        <div class="mt-[2px] ml-[3px] flex h-[23px] shrink-0 items-end whitespace-nowrap" role="tablist">
          <button type="button" role="tab" class="z-10 -mb-px h-6 w-[52px] border border-b-0 border-[#d9d9d9] bg-white pr-[4px] pb-[3px]">Rules</button>
          <button type="button" role="tab" class="h-[21px] w-[46px] border-t border-r border-[#d9d9d9]">Forms</button>
          <button type="button" role="tab" class="h-[21px] w-[87px] border-t border-r border-[#d9d9d9]">Global Forms</button>
          <button type="button" role="tab" class="h-[21px] w-[91px] border-t border-r border-[#d9d9d9]">External Rules</button>
        </div>
        <div class="mr-[7px] mb-[4px] ml-[3px] flex-1 border border-[#d9d9d9] bg-white pt-[3px] pl-[8px]">
          <div class="flex items-center gap-[5px] leading-5"><svg class="h-4 w-4"><use href="#part"/></svg>Part1</div>
        </div>
      </section>
    </aside>

    <!-- Viewport -->
    <div class="flex min-w-0 flex-1 flex-col bg-white">
      <svg class="min-h-0 w-full flex-1" viewBox="0 0 1240 765">
        <defs>
          <linearGradient id="outer"><stop offset="0" stop-color="#bbbbba"/><stop offset=".1" stop-color="#bfbebd"/><stop offset=".3" stop-color="#bbbbba"/><stop offset=".5" stop-color="#b2b2b1"/><stop offset=".75" stop-color="#a5a5a3"/><stop offset=".93" stop-color="#9b9b99"/><stop offset="1" stop-color="#9c9c9a"/></linearGradient>
          <linearGradient id="bore"><stop offset="0" stop-color="#9c9c9a"/><stop offset=".1" stop-color="#9b9b99"/><stop offset=".3" stop-color="#a6a6a5"/><stop offset=".55" stop-color="#b5b5b4"/><stop offset=".8" stop-color="#bebdbc"/><stop offset="1" stop-color="#bbbbba"/></linearGradient>
        </defs>
        <path d="M499 283.500V481.500A302.500 174.500 0 0 0 1104 481.500V283.500z" fill="url(#outer)"/>
        <path d="M499 472V481.500A302.500 174.500 0 0 0 1104 481.500V481" fill="none" stroke="#3c3c3c"/>
        <ellipse cx="801.500" cy="283.500" rx="302.500" ry="174.500" fill="#c9c9c7" stroke="#3c3c3c"/>
        <ellipse cx="801.500" cy="283.500" rx="151.500" ry="87.500" fill="url(#bore)" stroke="#3c3c3c"/>
      </svg>

      <!-- Document tabs -->
      <div class="flex h-[30px] shrink-0 items-stretch bg-[#5f5f5f] text-[#d0d0d0]">
        <div class="flex w-[151px] items-center gap-[10px] border-r border-[#999999] pl-[5px]">
          <button type="button" aria-label="Cascade"><svg class="h-5 w-5" viewBox="0 0 20 20" fill="none" stroke="#cfcfcf" stroke-width="1.500"><path d="M4 6H1V1h11v3M7 11H4V6h11v3M8 11h11v8H8zM8 12h11"/></svg></button>
          <button type="button" aria-label="Tile"><svg class="h-5 w-5" viewBox="0 0 20 20" fill="none" stroke="#cfcfcf" stroke-width="1.500"><path d="M1 1h7v7H1zM11 1h7v7h-7zM1 11h7v8H1zM11 11h7v8h-7zM1 2h7M11 2h7M1 12h7M11 12h7"/></svg></button>
          <button type="button" aria-label="Tile horizontally"><svg class="h-5 w-5" viewBox="0 0 20 20" fill="none" stroke="#cfcfcf" stroke-width="1.500"><path d="M1 1h18v7H1zM1 11h18v8H1zM1 2h18M1 12h18"/></svg></button>
          <button type="button" aria-label="Tile vertically"><svg class="h-5 w-5" viewBox="0 0 20 20" fill="none" stroke="#cfcfcf" stroke-width="1.500"><path d="M1 1h7v18H1zM11 1h7v18h-7zM1 2h7M11 2h7"/></svg></button>
          <button type="button" aria-label="Expand"><svg class="ml-[4px] h-[10px] w-3" viewBox="0 0 12 10"><path d="M6 0l6 10H0z" fill="#e0e0e0"/></svg></button>
        </div>
        <a href="#" class="flex w-[90px] items-center pt-px pl-[10px]">My Home</a>
        <a href="#" class="flex w-[58px] items-center pt-px pl-[10px]">Part1</a>
        <div class="flex w-[100px] items-center gap-[8px] border-r border-[#b0b0b0] bg-[#f5f5f5] pt-px pl-[10px] text-[#505050]">
          <a href="#">Part1.ipt</a>
          <button type="button" aria-label="Close document" class="h-[11px] w-[11px]"><svg viewBox="0 0 11 11"><path d="M1 1l9 9M10 1l-9 9" stroke="#555" stroke-width="2.800"/></svg></button>
        </div>
      </div>
    </div>
  </main>

  <!-- Status bar -->
  <footer class="shrink-0">
    <p class="h-[29px] pt-[3px] leading-[28px] text-black">For Help, press F1</p>
    <div class="flex h-[9px] bg-black">
      <div class="ml-[59px] w-[430px] bg-[#333333]"></div>
      <div class="ml-[373px] w-[61px] bg-[#333333]"></div>
    </div>
  </footer>
</body>
</html>
